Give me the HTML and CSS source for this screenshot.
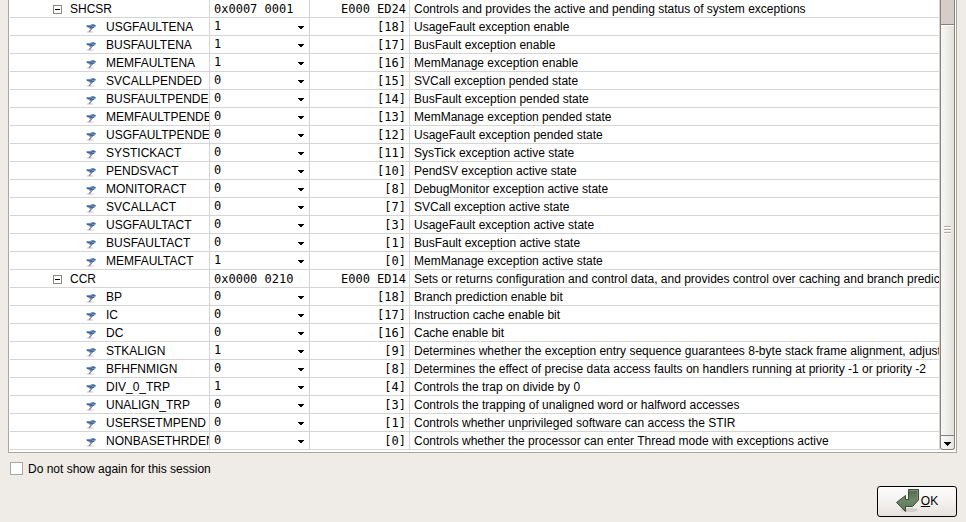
FILE: index.html
```
<!DOCTYPE html>
<html lang="en">
<head>
    <meta charset="UTF-8">
    <meta name="viewport" content="width=device-width, initial-scale=1.0">
    <title>Registers</title>
    <link rel="stylesheet" href="styles.css">
</head>
<body>
    <!-- Shared icons -->
    <svg class="sprite" aria-hidden="true">
        <symbol id="field-icon" viewBox="0 0 10 10">
            <ellipse cx="4" cy="9" rx="4" ry="1" fill="#e6e2e4"/>
            <path d="M7 4L3 9" stroke="#8f86ac" stroke-width="1.500" fill="none"/>
            <path d="M0 3l1-1h3l2-1h2l1 1h1v1L8 5H7L6 6H4L3 5 1 4z" fill="#7096be"/>
            <path d="M1 3.500h5M6 2.500h3M4 4.500h4" stroke="#456996" fill="none"/>
        </symbol>
    </svg>

    <div class="panel">
        <table class="registers">
            <colgroup>
                <col class="col-name">
                <col class="col-value">
                <col class="col-address">
                <col>
            </colgroup>
            <tbody id="rows"></tbody>
        </table>
        <div class="scrollbar">
            <div class="thumb"><i></i><i></i><i></i></div>
            <button class="scroll-down" type="button" aria-label="Scroll down">
                <svg width="7" height="4" viewBox="0 0 7 4" shape-rendering="crispEdges"><path d="M0 0h7v1H6v1H5v1H4v1H3V3H2V2H1V1H0z"/></svg>
            </button>
        </div>
    </div>

    <div class="session">
        <input type="checkbox" id="hide">
        <label for="hide">Do not show again for this session</label>
    </div>

    <div class="actions">
        <button class="ok" type="button">
            <svg width="24" height="24" viewBox="0 0 24 24" aria-hidden="true">
                <defs>
                    <linearGradient id="arrow" x1="0" y1="0" x2="0" y2="1">
                        <stop offset="0" stop-color="#50694a"/>
                        <stop offset="0.5" stop-color="#6f8768"/>
                        <stop offset="1" stop-color="#5b7654"/>
                    </linearGradient>
                </defs>
                <ellipse cx="13" cy="21" rx="9" ry="2" fill="#d2cfca"/>
                <path d="M12.500 0.500h10v10.500l-6 6.500H9.500v5L0.500 13.500l9-7v4h3z" fill="url(#arrow)" stroke="#3c4b39" stroke-linejoin="round"/>
                <path d="M13.500 1.500h8v9" fill="none" stroke="#7e9577"/>
            </svg>
            <span><u>O</u>K</span>
        </button>
    </div>

    <script src="script.js"></script>
</body>
</html>
```
FILE: styles.css
```
* {
    box-sizing: border-box;
}

body {
    margin: 0;
    padding: 0 9px 0 8px;
    background-color: #efebe7;
    color: black;
    font-family: "Liberation Sans", Arial, sans-serif;
    font-size: 12px;
    overflow: hidden;
}

.sprite {
    position: absolute;
    width: 0;
    height: 0;
}

.panel {
    display: flex;
    padding: 0 1px 2px;
    background-color: white;
    border: 1px solid #aca6a1;
    border-top: 0;
}

/* Register table */
.registers {
    flex: 1;
    min-width: 0;
    width: 100%;
    table-layout: fixed;
    border-collapse: separate;
    border-spacing: 0;
}

.col-name {
    width: 200px;
}

.col-value,
.col-address {
    width: 100px;
}

.registers td,
.registers th {
    height: 18px;
    padding: 1px 0 0;
    border-right: 1px solid #d5d5d5;
    border-bottom: 1px solid #d5d5d5;
    line-height: 16px;
    font-weight: normal;
    text-align: left;
    white-space: nowrap;
    overflow: hidden;
}

.name {
    display: flex;
    align-items: center;
    height: 16px;
    padding-left: 76px;
}

.name svg {
    flex: none;
    width: 10px;
    height: 10px;
    margin: 2px 10px 0 0;
}

.group .name {
    padding-left: 43px;
}

.toggle {
    flex: none;
    display: flex;
    align-items: center;
    justify-content: center;
    width: 9px;
    height: 9px;
    margin-right: 8px;
    padding: 0;
    background-color: white;
    border: 1px solid #8c8782;
}

.toggle::before {
    content: "";
    width: 5px;
    height: 1px;
    background-color: black;
}

.registers .value,
.registers .address {
    font-family: "DejaVu Sans Mono", monospace;
}

.value div {
    display: flex;
    align-items: center;
    height: 16px;
    padding: 0 5px 1px 4px;
}

.value select {
    flex: 1;
    appearance: none;
    height: 15px;
    padding: 0;
    background: none;
    border: 0;
    color: inherit;
    font: inherit;
    line-height: 15px;
}

.value svg {
    flex: none;
    margin-top: 1px;
}

.registers .address {
    padding: 2px 3px 0 0;
    line-height: 15px;
    text-align: right;
}

.registers .text {
    padding: 2px 0 0 4px;
    line-height: 15px;
}

/* Scrollbar */
.scrollbar {
    display: flex;
    flex-direction: column;
    width: 15px;
    padding-top: 24px;
    background-color: #d6cdc8;
    border: 1px solid #86817b;
    border-top: 0;
    border-radius: 0 0 3px 3px;
}

.thumb {
    flex: 1;
    display: flex;
    flex-direction: column;
    align-items: center;
    justify-content: center;
    gap: 1px;
    background: linear-gradient(to right, #f8f7f4, #e4e1db);
    border-top: 1px solid #86817b;
    box-shadow: inset 0 1px white;
}

.thumb i {
    width: 7px;
    height: 2px;
    background-color: white;
    border-top: 1px solid #b5aaa7;
}

.scroll-down {
    display: flex;
    align-items: center;
    justify-content: center;
    height: 14px;
    padding: 2px 0 0;
    background: linear-gradient(to right, #fbfaf9, #e9e6e1);
    border: 0;
    border-top: 1px solid #86817b;
    border-radius: 0 0 3px 3px;
}

/* Bottom controls */
.session {
    display: flex;
    align-items: flex-start;
    gap: 5px;
    padding: 9px 1px 10px;
}

.session input {
    appearance: none;
    width: 13px;
    height: 13px;
    margin: 0 0 0 1px;
    background-color: white;
    border: 1px solid #aca6a1;
}

.session input:checked {
    background-color: #5b7654;
}

.session label {
    line-height: 14px;
}

.actions {
    display: flex;
    justify-content: flex-end;
}

.ok {
    display: flex;
    align-items: center;
    justify-content: center;
    gap: 1px;
    width: 80px;
    height: 31px;
    padding: 0 0 2px;
    background: linear-gradient(#fdfcfb, #f4f2ef 50%, #e6e2dd);
    border: 1px solid black;
    border-radius: 3px;
    color: inherit;
    font: inherit;
}
```
FILE: script.js
```
const registers = [
    ['SHCSR', '0x0007 0001', 'E000 ED24', 'Controls and provides the active and pending status of system exceptions'],
    ['USGFAULTENA', 1, 18, 'UsageFault exception enable'],
    ['BUSFAULTENA', 1, 17, 'BusFault exception enable'],
    ['MEMFAULTENA', 1, 16, 'MemManage exception enable'],
    ['SVCALLPENDED', 0, 15, 'SVCall exception pended state'],
    ['BUSFAULTPENDED', 0, 14, 'BusFault exception pended state'],
    ['MEMFAULTPENDED', 0, 13, 'MemManage exception pended state'],
    ['USGFAULTPENDED', 0, 12, 'UsageFault exception pended state'],
    ['SYSTICKACT', 0, 11, 'SysTick exception active state'],
    ['PENDSVACT', 0, 10, 'PendSV exception active state'],
    ['MONITORACT', 0, 8, 'DebugMonitor exception active state'],
    ['SVCALLACT', 0, 7, 'SVCall exception active state'],
    ['USGFAULTACT', 0, 3, 'UsageFault exception active state'],
    ['BUSFAULTACT', 0, 1, 'BusFault exception active state'],
    ['MEMFAULTACT', 1, 0, 'MemManage exception active state'],
    ['CCR', '0x0000 0210', 'E000 ED14', 'Sets or returns configuration and control data, and provides control over caching and branch prediction'],
    ['BP', 0, 18, 'Branch prediction enable bit'],
    ['IC', 0, 17, 'Instruction cache enable bit'],
    ['DC', 0, 16, 'Cache enable bit'],
    ['STKALIGN', 1, 9, 'Determines whether the exception entry sequence guarantees 8-byte stack frame alignment, adjusting the SP'],
    ['BFHFNMIGN', 0, 8, 'Determines the effect of precise data access faults on handlers running at priority -1 or priority -2'],
    ['DIV_0_TRP', 1, 4, 'Controls the trap on divide by 0'],
    ['UNALIGN_TRP', 0, 3, 'Controls the trapping of unaligned word or halfword accesses'],
    ['USERSETMPEND', 0, 1, 'Controls whether unprivileged software can access the STIR'],
    ['NONBASETHRDENA', 0, 0, 'Controls whether the processor can enter Thread mode with exceptions active']
];

document.getElementById('rows').innerHTML = registers.map(([name, value, address, text]) => {
    const isGroup = typeof value === 'string';

    const icon = isGroup
        ? `<button class="toggle" type="button" aria-label="Collapse ${name}"></button>`
        : '<svg aria-hidden="true"><use href="#field-icon"/></svg>';

    const field = isGroup
        ? value
        : `<select aria-label="${name}">
               <option${value === 0 ? ' selected' : ''}>0</option>
               <option${value === 1 ? ' selected' : ''}>1</option>
           </select>
           <svg width="6" height="3" viewBox="0 0 6 3" shape-rendering="crispEdges" aria-hidden="true"><path d="M0 0h6v1H5v1H4v1H2V2H1V1H0z"/></svg>`;

    return `<tr class="${isGroup ? 'group' : 'field'}">
        <th scope="row"><div class="name">${icon}<span>${name}</span></div></th>
        <td class="value"><div>${field}</div></td>
        <td class="address">${isGroup ? address : `[${address}]`}</td>
        <td class="text">${text}</td>
    </tr>`;
}).join('');
```
